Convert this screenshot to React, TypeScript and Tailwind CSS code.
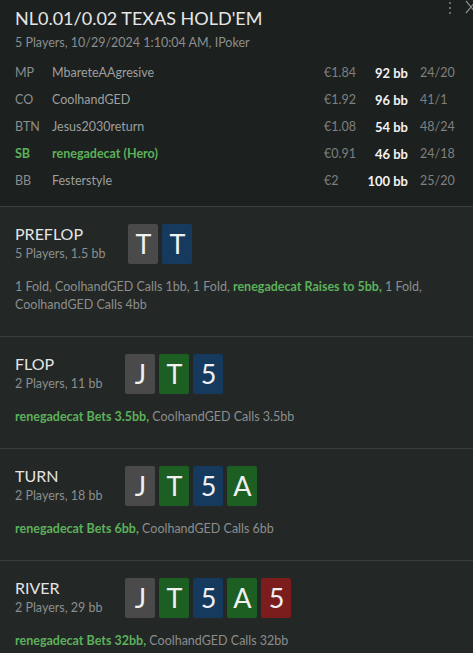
import { ReactNode } from "react";

type Card = { rank: string; color: "gray" | "green" | "blue" | "red" };

const cardBg: Record<Card["color"], string> = {
  gray: "bg-[#4a4a4a]",
  green: "bg-[#1d5f22]",
  blue: "bg-[#163a5e]",
  red: "bg-[#7b1c1d]",
};

const players = [
  { pos: "MP", name: "MbareteAAgresive", money: "€1.84", bb: "92 bb", stat: "24/20" },
  { pos: "CO", name: "CoolhandGED", money: "€1.92", bb: "96 bb", stat: "41/1" },
  { pos: "BTN", name: "Jesus2030return", money: "€1.08", bb: "54 bb", stat: "48/24" },
  { pos: "SB", name: "renegadecat (Hero)", money: "€0.91", bb: "46 bb", stat: "24/18", hero: true },
  { pos: "BB", name: "Festerstyle", money: "€2", bb: "100 bb", stat: "25/20" },
];

function Hero({ children }: { children: ReactNode }) {
  return <span className="font-bold text-[#5cb15a]">{children}</span>;
}

function Street({
  title,
  info,
  cards,
  children,
}: {
  title: string;
  info: string;
  cards: Card[];
  children: ReactNode;
}) {
  return (
    <section className="border-t border-[#3a3e3d] px-[15px] pt-[16px] pb-[22px]">
      <div className="flex items-end gap-[23px]">
        <div className="pb-[1px]">
          <div className="text-[16px] leading-[22px] text-[#e4e4e4]">{title}</div>
          <div className="text-[12.5px] leading-[18px] text-[#8b8e8d]">{info}</div>
        </div>
        <div className="flex gap-[4px]">
          {cards.map((c, i) => (
            <div
              key={i}
              className={`flex h-[40px] w-[30px] items-center justify-center rounded-[2px] text-[27px] text-[#f0f0f0] ${cardBg[c.color]}`}
            >
              {c.rank}
            </div>
          ))}
        </div>
      </div>
      <p className="mt-[14px] text-[12.5px] leading-[18px] text-[#8b8e8d]">{children}</p>
    </section>
  );
}

export default function App() {
  const J: Card = { rank: "J", color: "gray" };
  const T: Card = { rank: "T", color: "green" };
  const F: Card = { rank: "5", color: "blue" };
  const A: Card = { rank: "A", color: "green" };
  const R: Card = { rank: "5", color: "red" };

  return (
    <div className="relative min-h-[653px] w-[473px] overflow-hidden bg-[#232726] font-['Lato',sans-serif]">
      <div className="absolute right-[22px] top-[2px] flex flex-col gap-[3px]">
        <span className="h-[2px] w-[2px] bg-[#6b6e6d]" />
        <span className="h-[2px] w-[2px] bg-[#6b6e6d]" />
        <span className="h-[2px] w-[2px] bg-[#6b6e6d]" />
      </div>
      <svg className="absolute right-[-4px] top-[0px]" width="12" height="14" viewBox="0 0 12 14">
        <path d="M1 1 L11 13 M11 1 L1 13" stroke="#8a8d8c" strokeWidth="1.2" fill="none" />
      </svg>

      <header className="bg-[#1c201f] px-[15px] pt-[5px] pb-[11px]">
        <h1 className="text-[18px] leading-[26px] text-[#e6e6e6]">NL0.01/0.02 TEXAS HOLD'EM</h1>
        <p className="mt-[3px] text-[12.5px] leading-[18px] text-[#8b8e8d]">
          5 Players, 10/29/2024 1:10:04 AM, IPoker
        </p>
        <div className="mt-[8px]">
          {players.map((p) => (
            <div key={p.pos} className="flex h-[27px] items-center whitespace-nowrap text-[12.5px]">
              <span className={`w-[37px] ${p.hero ? "font-bold text-[#5cb15a]" : "text-[#8b8e8d]"}`}>
                {p.pos}
              </span>
              <span className={`flex-1 ${p.hero ? "font-bold text-[#5cb15a]" : "text-[#9c9f9e]"}`}>
                {p.name}
              </span>
              <span className="w-[42px] text-[#7e8180]">{p.money}</span>
              <span className="w-[42px] text-right text-[13px] font-bold text-[#f2f2f2]">{p.bb}</span>
              <span className="ml-[12px] w-[38px] text-[#7e8180]">{p.stat}</span>
            </div>
          ))}
        </div>
      </header>

      <Street title="PREFLOP" info="5 Players, 1.5 bb" cards={[{ rank: "T", color: "gray" }, { rank: "T", color: "blue" }]}>
        1 Fold, CoolhandGED Calls 1bb, 1 Fold, <Hero>renegadecat Raises to 5bb,</Hero> 1 Fold,
        CoolhandGED Calls 4bb
      </Street>
      <Street title="FLOP" info="2 Players, 11 bb" cards={[J, T, F]}>
        <Hero>renegadecat Bets 3.5bb,</Hero> CoolhandGED Calls 3.5bb
      </Street>
      <Street title="TURN" info="2 Players, 18 bb" cards={[J, T, F, A]}>
        <Hero>renegadecat Bets 6bb,</Hero> CoolhandGED Calls 6bb
      </Street>
      <Street title="RIVER" info="2 Players, 29 bb" cards={[J, T, F, A, R]}>
        <Hero>renegadecat Bets 32bb,</Hero> CoolhandGED Calls 32bb
      </Street>
    </div>
  );
}
